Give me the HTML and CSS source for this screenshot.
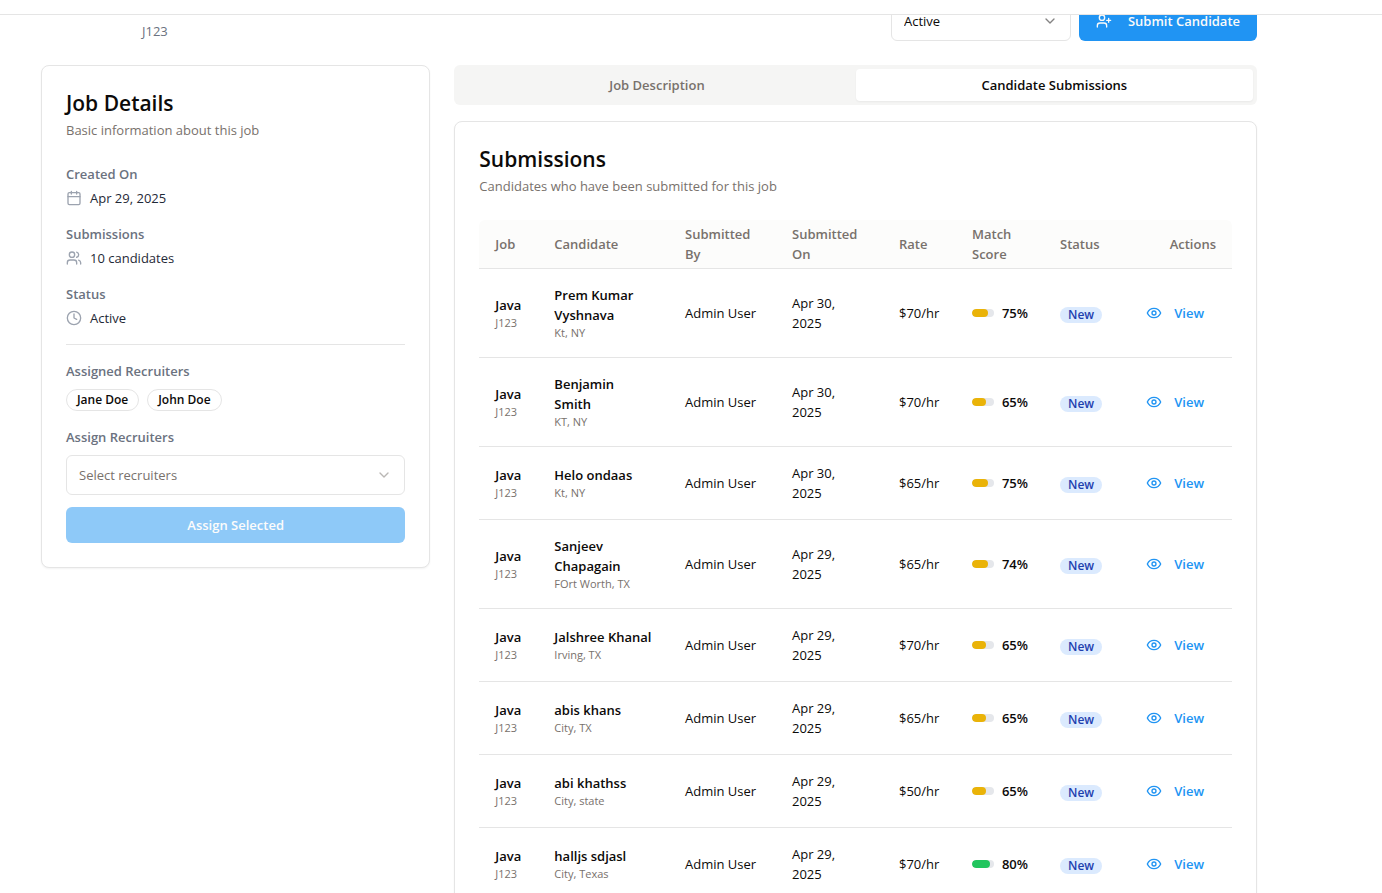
FILE: index.html
```html
<!DOCTYPE html>
<html lang="en">
<head>
<meta charset="utf-8">
<title>Job Details</title>
<link rel="stylesheet" href="styles.css">
</head>
<body>
<svg class="sprite" aria-hidden="true">
  <symbol id="chevron" viewBox="0 0 24 24"><path d="m6 9 6 6 6-6"/></symbol>
  <symbol id="calendar" viewBox="0 0 24 24"><path d="M8 2v4M16 2v4M3 10h18"/><rect x="3" y="4" width="18" height="18" rx="2"/></symbol>
  <symbol id="users" viewBox="0 0 24 24"><path d="M16 21v-2a4 4 0 0 0-4-4H6a4 4 0 0 0-4 4v2"/><circle cx="9" cy="7" r="4"/><path d="M22 21v-2a4 4 0 0 0-3-3.87M16 3.13a4 4 0 0 1 0 7.75"/></symbol>
  <symbol id="clock" viewBox="0 0 24 24"><circle cx="12" cy="12" r="10"/><path d="M12 6v6l4 2"/></symbol>
  <symbol id="user-plus" viewBox="0 0 24 24"><path d="M16 21v-2a4 4 0 0 0-4-4H6a4 4 0 0 0-4 4v2"/><circle cx="9" cy="7" r="4"/><path d="M19 8v6M22 11h-6"/></symbol>
  <symbol id="eye" viewBox="0 0 24 24"><path d="M2 12s3-7 10-7 10 7 10 7-3 7-10 7-10-7-10-7Z"/><circle cx="12" cy="12" r="3"/></symbol>
</svg>
<header class="topbar"></header>
<main class="page">
  <div class="page-head">
    <p class="job-code">J123</p>
    <div class="head-actions">
      <div class="select-wrap status-select">
        <select class="select" aria-label="Job status"><option>Active</option></select>
        <svg class="icon chevron"><use href="#chevron"/></svg>
      </div>
      <button class="btn btn-primary" type="button"><svg class="icon"><use href="#user-plus"/></svg>Submit Candidate</button>
    </div>
  </div>
  <div class="columns">
    <section class="card">
      <h2 class="card-title">Job Details</h2>
      <p class="card-sub">Basic information about this job</p>
      <div class="details">
        <div class="detail"><h3 class="label">Created On</h3><p class="value"><svg class="icon"><use href="#calendar"/></svg>Apr 29, 2025</p></div>
        <div class="detail"><h3 class="label">Submissions</h3><p class="value"><svg class="icon"><use href="#users"/></svg>10 candidates</p></div>
        <div class="detail"><h3 class="label">Status</h3><p class="value"><svg class="icon"><use href="#clock"/></svg>Active</p></div>
        <hr class="rule">
        <div class="group"><h3 class="label">Assigned Recruiters</h3><div class="chips"><span class="chip">Jane Doe</span><span class="chip">John Doe</span></div></div>
        <div class="group">
          <label class="label" for="recruiters">Assign Recruiters</label>
          <div class="select-wrap placeholder">
            <select class="select" id="recruiters"><option>Select recruiters</option></select>
            <svg class="icon chevron"><use href="#chevron"/></svg>
          </div>
          <button class="btn btn-assign" type="button" disabled>Assign Selected</button>
        </div>
      </div>
    </section>
    <div class="main-col">
      <div class="tabs" role="tablist">
        <button class="tab" role="tab" type="button" aria-selected="false">Job Description</button>
        <button class="tab active" role="tab" type="button" aria-selected="true">Candidate Submissions</button>
      </div>
      <section class="card">
        <h2 class="card-title">Submissions</h2>
        <p class="card-sub">Candidates who have been submitted for this job</p>
        <table class="table">
          <colgroup><col class="c-job"><col class="c-cand"><col class="c-by"><col class="c-on"><col class="c-rate"><col class="c-match"><col class="c-status"><col class="c-act"></colgroup>
          <thead><tr><th>Job</th><th>Candidate</th><th>Submitted By</th><th>Submitted On</th><th>Rate</th><th>Match Score</th><th>Status</th><th class="right">Actions</th></tr></thead>
          <tbody id="rows"></tbody>
        </table>
      </section>
    </div>
  </div>
</main>
<script src="app.js"></script>
</body>
</html>
```
FILE: app.js
```js
const submissions = [
  ["Prem Kumar Vyshnava", "Kt, NY", "Apr 30, 2025", 70, 75],
  ["Benjamin Smith", "KT, NY", "Apr 30, 2025", 70, 65],
  ["Helo ondaas", "Kt, NY", "Apr 30, 2025", 65, 75],
  ["Sanjeev Chapagain", "FOrt Worth, TX", "Apr 29, 2025", 65, 74],
  ["Jalshree Khanal", "Irving, TX", "Apr 29, 2025", 70, 65],
  ["abis khans", "City, TX", "Apr 29, 2025", 65, 65],
  ["abi khathss", "City, state", "Apr 29, 2025", 50, 65],
  ["halljs sdjasl", "City, Texas", "Apr 29, 2025", 70, 80],
];

document.getElementById("rows").innerHTML = submissions.map(([name, place, date, rate, score]) => `
  <tr>
    <td><div class="strong">Java</div><div class="minor">J123</div></td>
    <td><div class="strong">${name}</div><div class="minor">${place}</div></td>
    <td>Admin User</td>
    <td class="date">${date}</td>
    <td>$${rate}/hr</td>
    <td><div class="score"><span class="meter"><span class="fill ${score >= 80 ? "high" : ""}" style="width:${score}%"></span></span><span class="pct">${score}%</span></div></td>
    <td><span class="badge">New</span></td>
    <td class="right"><button class="view" type="button"><svg class="icon"><use href="#eye"/></svg>View</button></td>
  </tr>`).join("");
```
FILE: styles.css
```css
* { box-sizing: border-box; }
body {
  margin: 0;
  height: 100vh;
  overflow: hidden;
  background: #fff;
  color: #0c0a09;
  font: 13px/20px "Segoe UI", "Open Sans", "Noto Sans", sans-serif;
}
h2, h3, p { margin: 0; }
button, select { font: inherit; color: inherit; }
.sprite { display: none; }
.icon {
  width: 16px;
  height: 16px;
  flex: none;
  fill: none;
  stroke: currentColor;
  stroke-width: 2;
  stroke-linecap: round;
  stroke-linejoin: round;
}
.topbar {
  position: fixed;
  inset: 0 0 auto;
  z-index: 5;
  height: 15px;
  background: #fff;
  border-bottom: 1px solid #e5e5e5;
}
.page { padding: 1px 125px 24px 41px; }
.page-head {
  display: flex;
  justify-content: space-between;
  align-items: flex-end;
  margin-bottom: 24px;
}
.job-code { padding-left: 101px; color: #6b7280; }
.head-actions { display: flex; gap: 8px; }
.select-wrap { position: relative; }
.status-select { width: 180px; }
.select {
  display: block;
  width: 100%;
  height: 40px;
  padding: 0 36px 0 12px;
  border: 1px solid #e5e5e5;
  border-radius: 6px;
  background: #fff;
  appearance: none;
}
.placeholder { color: #78716c; }
.chevron {
  position: absolute;
  top: 12px;
  right: 13px;
  opacity: 0.5;
  pointer-events: none;
}
.btn {
  display: flex;
  align-items: center;
  justify-content: center;
  border: 0;
  border-radius: 6px;
  background: #2094f3;
  color: #fafaf9;
  font-weight: 700;
}
.btn-primary { min-width: 178px; height: 40px; padding: 0 16px; gap: 16px; font-weight: 600; }
.btn-assign { width: 100%; height: 36px; margin-top: 4px; font-weight: 600; opacity: 0.5; }
.columns {
  display: grid;
  grid-template-columns: repeat(3, minmax(0, 1fr));
  column-gap: 24px;
  align-items: start;
}
.main-col { grid-column: span 2; display: grid; gap: 16px; }
.card {
  padding: 24px;
  border: 1px solid #e5e5e5;
  border-radius: 8px;
  background: #fff;
  box-shadow: 0 1px 2px rgba(0, 0, 0, 0.05);
}
.card-title { font-size: 21px; line-height: 26px; font-weight: 600; }
.card-sub { margin: 4px 0 24px; color: #78716c; }
.details { display: grid; gap: 16px; }
.detail { display: grid; gap: 4px; }
.group { display: grid; gap: 8px; }
.label { font-size: 13px; font-weight: 600; color: #6b7280; }
.value { display: flex; align-items: center; gap: 8px; color: #1f2937; }
.value .icon { color: #9ca3af; }
.rule { width: 100%; height: 1px; margin: 0; border: 0; background: #e5e5e5; }
.chips { display: flex; gap: 8px; }
.chip {
  padding: 2px 10px;
  border: 1px solid #e5e5e5;
  border-radius: 11px;
  font-size: 12px;
  line-height: 16px;
  font-weight: 600;
}
.tabs {
  display: grid;
  grid-template-columns: 1fr 1fr;
  padding: 4px;
  border-radius: 6px;
  background: #f5f5f4;
}
.tab {
  height: 32px;
  border: 0;
  border-radius: 4px;
  background: none;
  color: #78716c;
  font-weight: 600;
}
.tab.active { background: #fff; color: #0c0a09; box-shadow: 0 1px 2px rgba(0, 0, 0, 0.05); }
.table { width: 100%; table-layout: fixed; border-collapse: separate; border-spacing: 0; }
.c-job { width: 59px; }
.c-by, .c-on { width: 107px; }
.c-rate, .c-status { width: 73px; }
.c-match { width: 88px; }
.c-act { width: 115px; }
th {
  height: 49px;
  padding: 4px 16px;
  background: #fcfcfb;
  border-bottom: 1px solid #e5e5e5;
  color: #78716c;
  font-weight: 600;
  text-align: left;
}
th:first-child { border-top-left-radius: 6px; }
th:last-child { border-top-right-radius: 6px; }
td { padding: 16px; border-bottom: 1px solid #e5e5e5; vertical-align: middle; }
td.date { padding-right: 32px; }
th.right, td.right { text-align: right; }
td.right { padding: 0; }
.strong { font-weight: 600; }
.minor { font-size: 11px; line-height: 16px; color: #78716c; }
.score { display: flex; align-items: center; gap: 8px; }
.meter { flex: 1; height: 8px; border-radius: 4px; background: #e5e7eb; overflow: hidden; }
.fill { display: block; height: 8px; border-radius: 4px; background: #eab308; }
.fill.high { background: #22c55e; }
.pct { font-weight: 600; }
.badge {
  display: inline-block;
  padding: 0 8px;
  border-radius: 8px;
  background: #dbeafe;
  color: #1e40af;
  font-size: 12px;
  line-height: 16px;
  font-weight: 600;
  vertical-align: middle;
}
.view {
  display: inline-flex;
  align-items: center;
  gap: 12px;
  height: 36px;
  margin-right: 16px;
  padding: 0 12px;
  border: 0;
  background: none;
  color: #2094f3;
  font-weight: 600;
}
```
